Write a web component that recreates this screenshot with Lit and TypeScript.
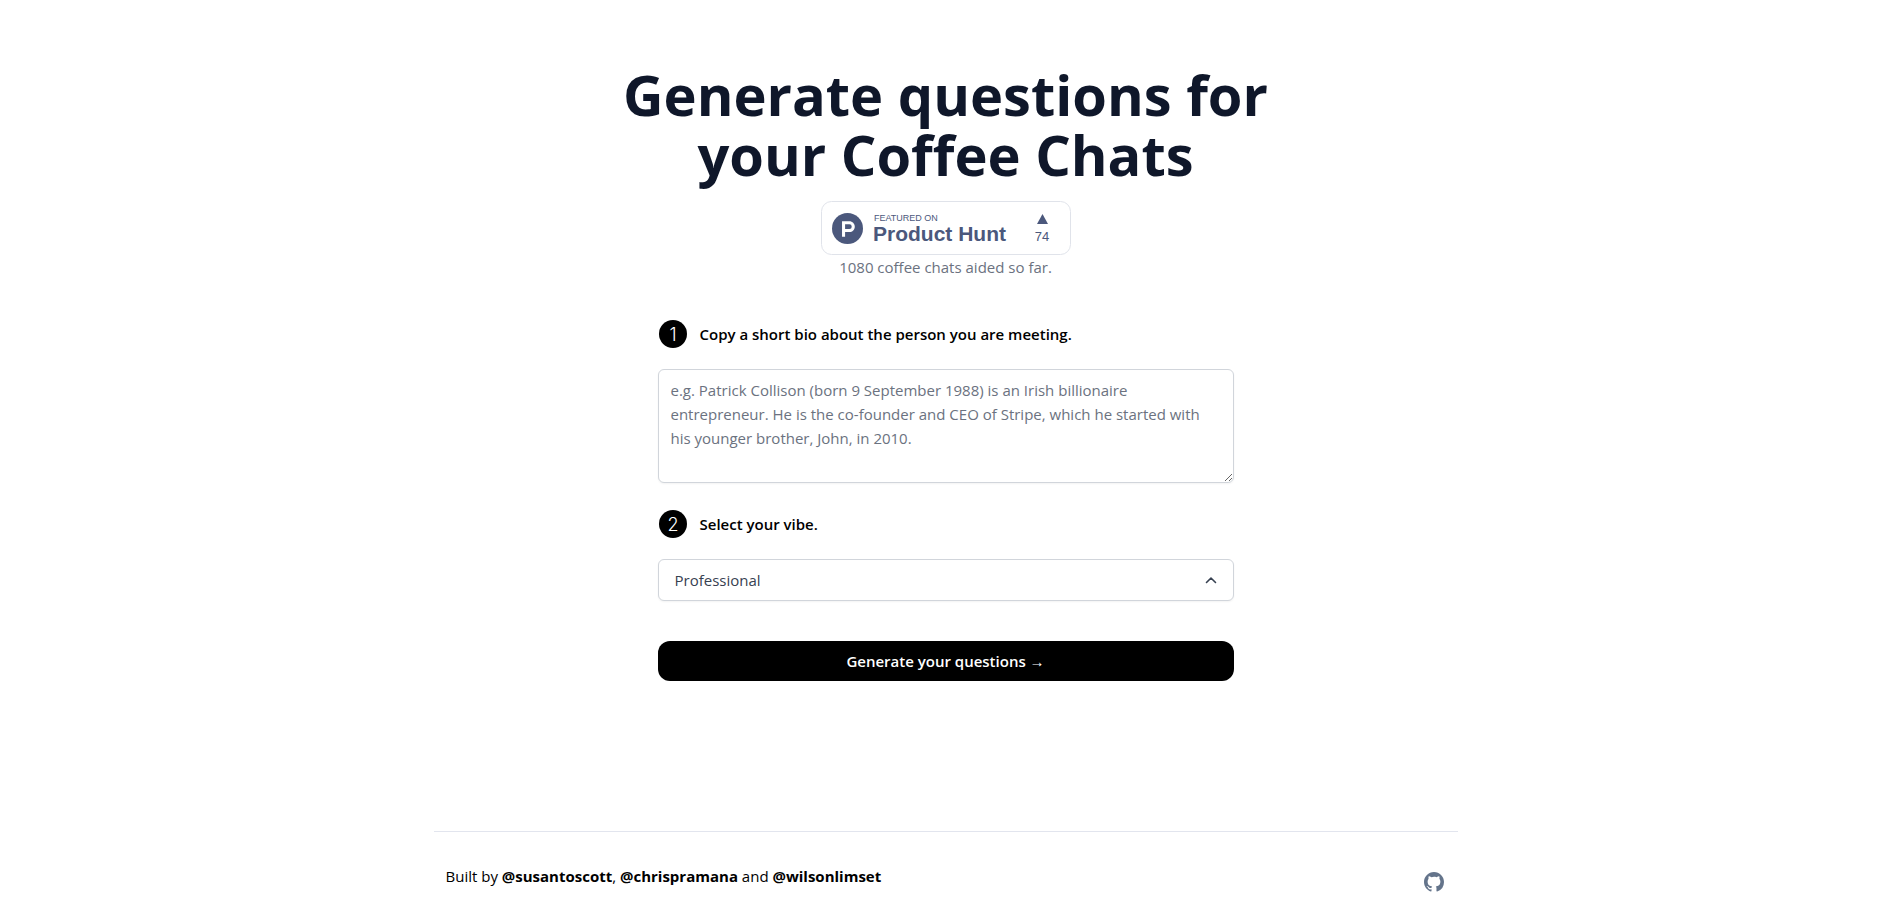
import { LitElement, html, css } from "lit";
import { customElement, property } from "lit/decorators.js";

@customElement("product-hunt-badge")
class ProductHuntBadge extends LitElement {
  @property({ type: Number }) votes = 0;

  static styles = css`
    :host { display: block; }
    .link { display: block; text-decoration: none; }
    .badge { display: block; width: 250px; height: 54px; }
    .word { font-family: "Liberation Sans", Arial, sans-serif; fill: #4b587c; }
    .small { font-size: 9px; }
    .name { font-size: 21px; font-weight: 700; }
    .votes { font-size: 13px; text-anchor: middle; }
  `;

  render() {
    return html`
      <a class="link" href="#product-hunt" aria-label="Featured on Product Hunt">
        <svg class="badge" viewBox="0 0 250 54">
          <rect x="0.5" y="0.5" width="249" height="53" rx="10" fill="#fff" stroke="#e0e3ea" />
          <circle cx="26.5" cy="27.5" r="15.5" fill="#4b587c" />
          <path transform="translate(11 12)" fill="#fff" fill-rule="evenodd"
            d="M17.43 15.956H13.09V11.306h4.34a2.3 2.325 0 0 1 0 4.65M17.43 8.206H10.03v15.5h3.06v-4.65h4.34c2.96 0 5.36-2.43 5.36-5.425s-2.4-5.425-5.36-5.425" />
          <text class="word small" x="53" y="20">FEATURED ON</text>
          <text class="word name" x="52" y="40">Product Hunt</text>
          <path d="M221.5 13L227 23H216z" fill="#4b587c" />
          <text class="word votes" x="221" y="40">${this.votes}</text>
        </svg>
      </a>
    `;
  }
}

@customElement("step-number")
class StepNumber extends LitElement {
  @property({ type: Number }) value = 1;

  static styles = css`
    :host { display: block; }
    .disc { display: block; width: 30px; height: 30px; }
    .digit { font: 300 18px Inter, "Liberation Sans", sans-serif; fill: #fff; text-anchor: middle; }
  `;

  render() {
    return html`
      <svg class="disc" viewBox="0 0 30 30">
        <circle cx="15" cy="15" r="14" fill="#000" />
        <text class="digit" x="15" y="21.5">${this.value}</text>
      </svg>
    `;
  }
}

@customElement("app-root")
class AppRoot extends LitElement {
  static styles = css`
    :host {
      display: block;
      font-family: "Segoe UI", "Open Sans", "Noto Sans", sans-serif;
      font-size: 15px;
      line-height: 24px;
      color: #000;
      background: #fff;
    }
    *, *::before, *::after { box-sizing: border-box; }
    .page {
      display: flex;
      flex-direction: column;
      align-items: center;
      min-height: 100vh;
      padding-right: 8px;
    }
    .main {
      flex: 1;
      display: flex;
      flex-direction: column;
      align-items: center;
      width: 100%;
      padding: 64px 16px 48px;
    }
    .title {
      max-width: 708px;
      margin: 0 0 17px;
      font-size: 56px;
      line-height: 60px;
      font-weight: 700;
      text-align: center;
      color: #0f172a;
    }
    .count { margin: 0 0 40px; color: #6b7280; }
    .form {
      display: flex;
      flex-direction: column;
      width: 100%;
      max-width: 576px;
    }
    .step {
      display: flex;
      align-items: center;
      gap: 12px;
      margin-bottom: 20px;
      font-weight: 600;
    }
    .bio, .vibe {
      display: block;
      width: 100%;
      font: inherit;
      background: #fff;
      border: 1px solid #d1d5db;
      border-radius: 6px;
      box-shadow: 0 1px 2px rgba(0, 0, 0, 0.05);
    }
    .bio { margin-bottom: 26px; padding: 8px 12px; resize: vertical; color: #000; }
    .bio::placeholder { color: #6b7280; opacity: 1; }
    .select { position: relative; margin-bottom: 40px; }
    .vibe { appearance: none; padding: 8px 40px 8px 16px; color: #374151; }
    .chevron {
      position: absolute;
      top: 11px;
      right: 13px;
      width: 20px;
      height: 20px;
      fill: none;
      stroke: #374151;
      stroke-width: 1.6;
      pointer-events: none;
    }
    .submit {
      padding: 8px 16px;
      font: inherit;
      font-weight: 600;
      color: #fff;
      background: #000;
      border: 0;
      border-radius: 12px;
      cursor: pointer;
    }
    .footer {
      display: flex;
      justify-content: space-between;
      align-items: flex-start;
      width: 100%;
      max-width: 1024px;
      padding: 32px 12px 12px;
      border-top: 1px solid #e2e5ee;
    }
    .author { font-weight: 700; color: inherit; text-decoration: none; }
    .repo { display: block; padding-top: 6px; }
    .github { display: block; width: 24px; height: 24px; fill: #64748b; }
  `;

  render() {
    return html`
      <div class="page">
        <main class="main">
          <h1 class="title">Generate questions for your Coffee Chats</h1>
          <product-hunt-badge votes="74"></product-hunt-badge>
          <p class="count">1080 coffee chats aided so far.</p>
          <form class="form" @submit=${(e: Event) => e.preventDefault()}>
            <label class="step" for="bio">
              <step-number value="1"></step-number>
              Copy a short bio about the person you are meeting.
            </label>
            <textarea class="bio" id="bio" rows="4"
              placeholder="e.g. Patrick Collison (born 9 September 1988) is an Irish billionaire entrepreneur. He is the co-founder and CEO of Stripe, which he started with his younger brother, John, in 2010."></textarea>
            <label class="step" for="vibe">
              <step-number value="2"></step-number>
              Select your vibe.
            </label>
            <div class="select">
              <select class="vibe" id="vibe">
                <option>Professional</option>
              </select>
              <svg class="chevron" viewBox="0 0 20 20" aria-hidden="true">
                <path d="M5.5 12.5L10 8l4.5 4.5" stroke-linecap="round" stroke-linejoin="round" />
              </svg>
            </div>
            <button class="submit" type="submit">Generate your questions →</button>
          </form>
        </main>
        <footer class="footer">
          <div>
            Built by <a class="author" href="#susantoscott">@susantoscott</a>,
            <a class="author" href="#chrispramana">@chrispramana</a> and
            <a class="author" href="#wilsonlimset">@wilsonlimset</a>
          </div>
          <a class="repo" href="#github" aria-label="GitHub">
            <svg class="github" viewBox="0 0 24 24" aria-hidden="true">
              <path d="M12 2C6.477 2 2 6.484 2 12.017c0 4.425 2.865 8.18 6.839 9.504.5.092.682-.217.682-.483 0-.237-.008-.868-.013-1.703-2.782.605-3.369-1.343-3.369-1.343-.454-1.158-1.11-1.466-1.11-1.466-.908-.62.069-.608.069-.608 1.003.07 1.531 1.032 1.531 1.032.892 1.53 2.341 1.088 2.91.832.092-.647.35-1.088.636-1.338-2.22-.253-4.555-1.113-4.555-4.951 0-1.093.39-1.988 1.029-2.688-.103-.253-.446-1.272.098-2.65 0 0 .84-.27 2.75 1.026A9.564 9.564 0 0112 6.844c.85.004 1.705.115 2.504.337 1.909-1.296 2.747-1.027 2.747-1.027.546 1.379.202 2.398.1 2.651.64.7 1.028 1.595 1.028 2.688 0 3.848-2.339 4.695-4.566 4.943.359.309.678.92.678 1.855 0 1.338-.012 2.419-.012 2.747 0 .268.18.58.688.482A10.019 10.019 0 0022 12.017C22 6.484 17.522 2 12 2z" />
            </svg>
          </a>
        </footer>
      </div>
    `;
  }
}
